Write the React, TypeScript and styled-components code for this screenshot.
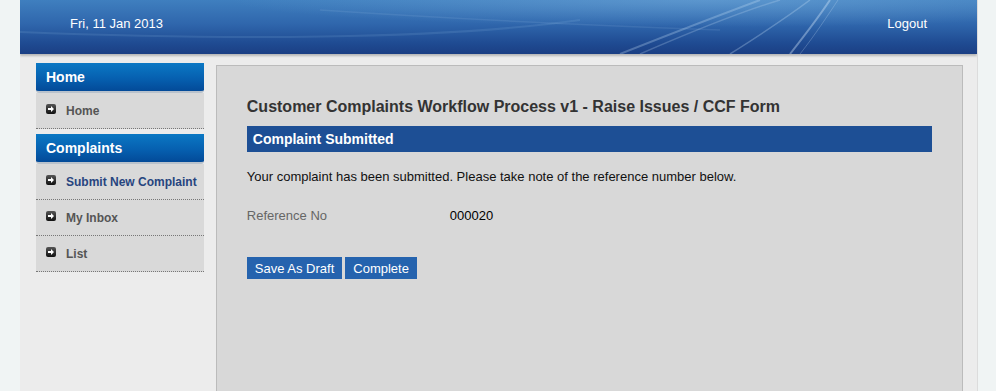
import React from 'react'
import styled, { createGlobalStyle } from 'styled-components'

const Global = createGlobalStyle`
  html, body { margin: 0; padding: 0; }
  body {
    background: #f0f4f4;
    font-family: "Liberation Sans", Arial, sans-serif;
    font-size: 13px;
  }
`

const Wrapper = styled.div`
  width: 957px;
  margin-left: 20px;
  height: 391px;
  background: #ececec;
  border-right: 1px solid #dcdcdc;
  display: flex;
  flex-direction: column;
  overflow: hidden;
`

const Header = styled.div`
  position: relative;
  height: 54px;
  background: linear-gradient(180deg, #3f7fbf 0%, #2f66ac 45%, #1f4b92 80%, #1b3f84 100%);
  display: flex;
  align-items: center;
  justify-content: space-between;
  padding: 0 50px 7px 50px;
  box-sizing: border-box;
  color: #fff;
  overflow: hidden;
  box-shadow: 0 2px 2px #b8b8b8;
  z-index: 1;
`

const Swoosh = styled.svg`
  position: absolute;
  left: 0;
  top: 0;
  pointer-events: none;
`

const HeaderText = styled.span`
  position: relative;
  font-size: 13px;
  color: #fff;
`

const Body = styled.div`
  flex: 1;
  display: flex;
  gap: 12px;
  padding: 9px 14px 0 16px;
`

const Sidebar = styled.div`
  width: 168px;
  display: flex;
  flex-direction: column;
`

const Group = styled.div`
  margin-bottom: 5px;
`

const GroupTitle = styled.div`
  height: 28px;
  line-height: 28px;
  padding-left: 10px;
  background: linear-gradient(180deg, #0b78c4 0%, #0660b0 55%, #034a98 100%);
  color: #fff;
  font-weight: bold;
  font-size: 14px;
  border-bottom: 2px solid #b9c2cc;
  border-radius: 0 0 3px 3px;
`

const Item = styled.div<{ active?: boolean }>`
  height: 35px;
  display: flex;
  align-items: center;
  gap: 10px;
  padding-left: 10px;
  padding-top: 1px;
  box-sizing: border-box;
  height: 36px;
  background: #d9d9d9;
  border-bottom: 1px dotted #777;
  font-weight: bold;
  font-size: 12px;
  color: ${p => (p.active ? '#27457f' : '#555')};
`

const Bullet = styled.span`
  width: 10px;
  height: 10px;
  border-radius: 2px;
  background: linear-gradient(180deg, #555 0%, #111 100%);
  display: inline-flex;
  align-items: center;
  justify-content: center;
  margin-top: -5px;
`

const Panel = styled.div`
  width: 748px;
  margin-top: 2px;
  background: #d8d8d8;
  border: 1px solid #bbb;
  border-bottom: none;
  padding: 31px 30px 0 30px;
  box-sizing: border-box;
`

const Title = styled.h1`
  margin: 0 0 9px 0;
  font-size: 16px;
  font-weight: bold;
  color: #333;
  line-height: 20px;
`

const Bar = styled.div`
  background: #1d4f95;
  color: #fff;
  height: 26px;
  line-height: 26px;
  padding-left: 6px;
  font-weight: bold;
  font-size: 14px;
`

const Note = styled.p`
  margin: 17px 0 0 0;
  color: #111;
  font-size: 13px;
  line-height: 16px;
`

const FieldRow = styled.div`
  display: grid;
  grid-template-columns: 203px 1fr;
  margin-top: 23px;
  line-height: 16px;
`

const Label = styled.span`
  color: #666;
`

const Value = styled.span`
  color: #000;
`

const Actions = styled.div`
  display: flex;
  gap: 3px;
  margin-top: 33px;
`

const Button = styled.button`
  background: #2563ae;
  color: #fff;
  border: none;
  height: 22px;
  padding: 0 8px;
  font-family: "Liberation Sans", Arial, sans-serif;
  font-size: 13px;
`

const Arrow = () => (
  <svg width="6" height="6" viewBox="0 0 6 6">
    <path d="M0 2h3V0l3 3-3 3V4H0z" fill="#fff" />
  </svg>
)

export default function App() {
  return (
    <>
      <Global />
      <Wrapper>
        <Header>
          <Swoosh width="957" height="54" viewBox="0 0 957 54">
            <defs>
              <radialGradient id="glow" cx="0.72" cy="0" r="0.5">
                <stop offset="0" stopColor="#7fb3e0" stopOpacity="0.45" />
                <stop offset="1" stopColor="#7fb3e0" stopOpacity="0" />
              </radialGradient>
            </defs>
            <rect width="957" height="54" fill="url(#glow)" />
            <path d="M0 32 C200 40 420 40 560 20" stroke="#9cc4ea" strokeOpacity="0.14" strokeWidth="2" fill="none" />
            <path d="M300 10 C450 20 560 25 700 30" stroke="#a9cdef" strokeOpacity="0.12" strokeWidth="1.5" fill="none" />
            <path d="M600 54 C660 30 700 15 740 0" stroke="#c3ddf5" strokeOpacity="0.3" strokeWidth="2" fill="none" />
            <path d="M620 54 C680 28 720 12 760 0" stroke="#c3ddf5" strokeOpacity="0.25" strokeWidth="1.5" fill="none" />
            <path d="M710 54 C740 35 770 15 790 0" stroke="#c3ddf5" strokeOpacity="0.3" strokeWidth="1.5" fill="none" />
            <path d="M770 54 C785 35 800 15 810 0" stroke="#d0e4f7" strokeOpacity="0.4" strokeWidth="2" fill="none" />
            <path d="M780 54 C795 35 808 15 818 0" stroke="#d0e4f7" strokeOpacity="0.25" strokeWidth="1" fill="none" />
          </Swoosh>
          <HeaderText>Fri, 11 Jan 2013</HeaderText>
          <HeaderText>Logout</HeaderText>
        </Header>
        <Body>
          <Sidebar>
            <Group>
              <GroupTitle>Home</GroupTitle>
              <Item><Bullet><Arrow /></Bullet>Home</Item>
            </Group>
            <Group>
              <GroupTitle>Complaints</GroupTitle>
              <Item active><Bullet><Arrow /></Bullet>Submit New Complaint</Item>
              <Item><Bullet><Arrow /></Bullet>My Inbox</Item>
              <Item><Bullet><Arrow /></Bullet>List</Item>
            </Group>
          </Sidebar>
          <Panel>
            <Title>Customer Complaints Workflow Process v1 - Raise Issues / CCF Form</Title>
            <Bar>Complaint Submitted</Bar>
            <Note>Your complaint has been submitted. Please take note of the reference number below.</Note>
            <FieldRow>
              <Label>Reference No</Label>
              <Value>000020</Value>
            </FieldRow>
            <Actions>
              <Button>Save As Draft</Button>
              <Button>Complete</Button>
            </Actions>
          </Panel>
        </Body>
      </Wrapper>
    </>
  )
}
